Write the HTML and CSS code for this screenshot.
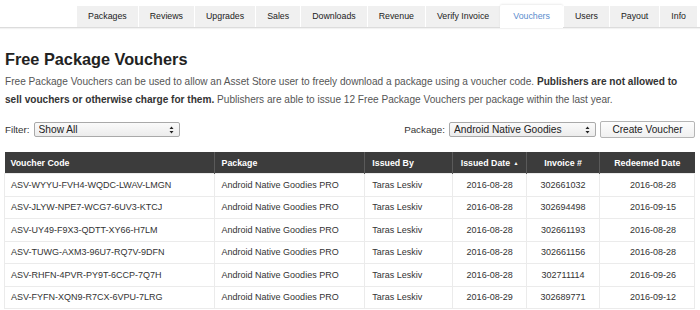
FILE: index.html
```html
<!DOCTYPE html>
<html lang="en">
<head>
    <meta charset="UTF-8">
    <title>Free Package Vouchers</title>
    <link rel="stylesheet" href="styles.css">
</head>
<body>
    <nav class="tabbar">
        <ul class="tabs">
            <li class="tab">Packages</li>
            <li class="tab">Reviews</li>
            <li class="tab">Upgrades</li>
            <li class="tab">Sales</li>
            <li class="tab">Downloads</li>
            <li class="tab">Revenue</li>
            <li class="tab">Verify Invoice</li>
            <li class="tab active">Vouchers</li>
            <li class="tab">Users</li>
            <li class="tab">Payout</li>
            <li class="tab">Info</li>
        </ul>
    </nav>

    <div class="content">
        <h1>Free Package Vouchers</h1>
        <p class="intro">Free Package Vouchers can be used to allow an Asset Store user to freely download a package using a voucher code. <b>Publishers are not allowed to sell vouchers or otherwise charge for them.</b> Publishers are able to issue 12 Free Package Vouchers per package within the last year.</p>

        <div class="toolbar">
            <div class="field">
                <span>Filter:</span>
                <div class="select-wrap filter-select">
                    <select>
                        <option>Show All</option>
                    </select>
                    <svg class="select-arrows" width="5" height="8" viewBox="0 0 5 8"><path d="M2.5 0.5 L4.5 3 H0.5 Z M2.5 7.5 L4.5 5 H0.5 Z" fill="#222"/></svg>
                </div>
            </div>
            <div class="field">
                <span>Package:</span>
                <div class="select-wrap package-select">
                    <select>
                        <option>Android Native Goodies</option>
                    </select>
                    <svg class="select-arrows" width="5" height="8" viewBox="0 0 5 8"><path d="M2.5 0.5 L4.5 3 H0.5 Z M2.5 7.5 L4.5 5 H0.5 Z" fill="#222"/></svg>
                </div>
                <button class="btn">Create Voucher</button>
            </div>
        </div>

        <table class="vouchers">
            <thead>
                <tr>
                    <th class="col-code">Voucher Code</th>
                    <th class="col-package">Package</th>
                    <th class="col-by">Issued By</th>
                    <th class="col-date center">Issued Date <span class="sort">&#9650;</span></th>
                    <th class="col-invoice center">Invoice #</th>
                    <th class="col-redeemed center">Redeemed Date</th>
                </tr>
            </thead>
            <tbody>
                <tr><td>ASV-WYYU-FVH4-WQDC-LWAV-LMGN</td><td>Android Native Goodies PRO</td><td>Taras Leskiv</td><td class="center">2016-08-28</td><td class="center">302661032</td><td class="right">2016-08-28</td></tr>
                <tr><td>ASV-JLYW-NPE7-WCG7-6UV3-KTCJ</td><td>Android Native Goodies PRO</td><td>Taras Leskiv</td><td class="center">2016-08-28</td><td class="center">302694498</td><td class="right">2016-09-15</td></tr>
                <tr><td>ASV-UY49-F9X3-QDTT-XY66-H7LM</td><td>Android Native Goodies PRO</td><td>Taras Leskiv</td><td class="center">2016-08-28</td><td class="center">302661193</td><td class="right">2016-08-28</td></tr>
                <tr><td>ASV-TUWG-AXM3-96U7-RQ7V-9DFN</td><td>Android Native Goodies PRO</td><td>Taras Leskiv</td><td class="center">2016-08-28</td><td class="center">302661156</td><td class="right">2016-08-28</td></tr>
                <tr><td>ASV-RHFN-4PVR-PY9T-6CCP-7Q7H</td><td>Android Native Goodies PRO</td><td>Taras Leskiv</td><td class="center">2016-08-28</td><td class="center">302711114</td><td class="right">2016-09-26</td></tr>
                <tr><td>ASV-FYFN-XQN9-R7CX-6VPU-7LRG</td><td>Android Native Goodies PRO</td><td>Taras Leskiv</td><td class="center">2016-08-29</td><td class="center">302689771</td><td class="right">2016-09-12</td></tr>
            </tbody>
        </table>
    </div>
</body>
</html>
```

FILE: styles.css
```css
* {
    margin: 0;
    padding: 0;
    box-sizing: border-box;
}

body {
    background-color: #fff;
    font-family: "Liberation Sans", Arial, sans-serif;
    color: #333;
}

/* top tabs */
.tabbar {
    padding-top: 5px;
    border-bottom: 1px solid #dcdcdc;
    box-shadow: 0 1px 1px rgba(0,0,0,0.05);
}

.tabs {
    list-style: none;
    display: flex;
    justify-content: flex-end;
    align-items: flex-end;
    padding-right: 3px;
}

.tab {
    background-color: #f0f0f0;
    border-left: 1px solid #fff;
    height: 21px;
    line-height: 21px;
    padding: 0 11px;
    font-size: 8.8px;
    color: #222;
    cursor: pointer;
}

.tab.active {
    background-color: #fff;
    color: #5a8dce;
    height: 23px;
    line-height: 23px;
    margin-bottom: -1px;
    padding: 0 13px;
    border-left: none;
    border-radius: 2px 2px 0 0;
    box-shadow: 0 -1px 2px rgba(0,0,0,0.08);
}

.content {
    padding: 0 5px 0 4px;
}

h1 {
    font-size: 16.3px;
    font-weight: bold;
    color: #222;
    margin-top: 21px;
    margin-left: 1px;
    line-height: 20px;
}

.intro {
    font-size: 10.1px;
    line-height: 17.5px;
    color: #555;
    margin-top: 4px;
    margin-left: 1px;
}

.intro b {
    color: #333;
}

/* filter row */
.toolbar {
    display: flex;
    justify-content: space-between;
    align-items: center;
    margin-top: 13px;
    margin-left: 1px;
}

.field {
    display: flex;
    align-items: center;
    gap: 4px;
    font-size: 9.8px;
    color: #333;
}

.select-wrap {
    position: relative;
    height: 15px;
}

.select-wrap select {
    appearance: none;
    -webkit-appearance: none;
    width: 100%;
    height: 15px;
    font-family: "Liberation Sans", Arial, sans-serif;
    font-size: 10.2px;
    border: 1px solid #a9a9a9;
    border-radius: 2px;
    background: linear-gradient(#fafafa, #ececec);
    color: #222;
    padding: 0 4px;
}

.select-arrows {
    position: absolute;
    right: 6px;
    top: 3.5px;
}

.filter-select {
    width: 146px;
}

.package-select {
    width: 147px;
}

.btn {
    font-family: "Liberation Sans", Arial, sans-serif;
    font-size: 10.1px;
    height: 17px;
    width: 95px;
    border: 1px solid #b5b5b5;
    border-radius: 2px;
    background: linear-gradient(#fdfdfd, #f0f0f0);
    color: #222;
    cursor: pointer;
}

/* voucher table */
.vouchers {
    width: 100%;
    border-collapse: collapse;
    margin-top: 14px;
    font-size: 9px;
}

.vouchers th {
    background-color: #3c3c3c;
    color: #fff;
    font-size: 8.8px;
    font-weight: bold;
    text-align: left;
    height: 21.5px;
    padding: 0 7px;
    border-left: 1px solid #5a5a5a;
}

.vouchers th:first-child {
    border-left: none;
    padding-left: 6px;
}

.vouchers td {
    height: 22.5px;
    padding: 0 7px;
    border: 1px solid #ebebeb;
    color: #333;
}

.vouchers td:first-child {
    padding-left: 6px;
}

.vouchers .center {
    text-align: center;
}

.vouchers td.right {
    text-align: right;
    padding-right: 18px;
}

.sort {
    font-size: 5px;
    vertical-align: 1px;
    margin-left: 1px;
}

.col-code { width: 210px; }
.col-package { width: 151px; }
.col-by { width: 88px; }
.col-date { width: 74px; }
.col-invoice { width: 73px; }
.col-redeemed { width: 95px; }
```
